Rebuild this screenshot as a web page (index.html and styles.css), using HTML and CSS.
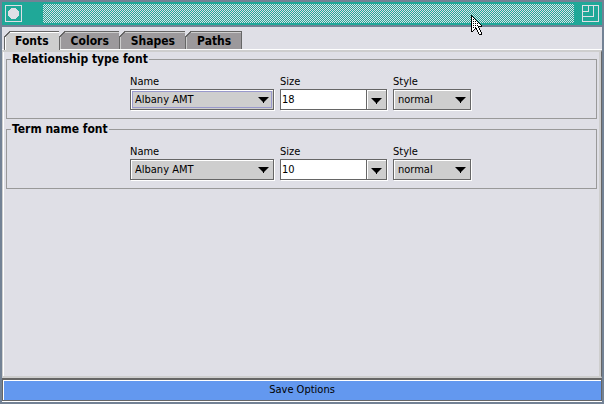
FILE: index.html
```html
<!DOCTYPE html>
<html lang="en">
<head>
<meta charset="utf-8">
<title>Options</title>
<link rel="stylesheet" href="styles.css">
</head>
<body>
<div class="window">
  <header class="titlebar">
    <button class="winbtn" type="button" aria-label="Window menu">
      <svg width="17" height="17" viewBox="0 0 17 17" shape-rendering="crispEdges"><path d="M.5.5h16v16H.5z" fill="none" stroke="#dfdfe6"/><path d="M6 3h5v1h1v1h1v1h1v5h-1v1h-1v1h-1v1H6v-1H5v-1H4v-1H3V6h1V5h1V4h1z" fill="#dfdfe6"/></svg>
    </button>
    <div class="stipple">
      <svg width="100%" height="100%"><defs><pattern id="dots" width="2" height="2" patternUnits="userSpaceOnUse"><path d="M1 0h1v1H1zM0 1h1v1H0z" fill="#dfdfe6" shape-rendering="crispEdges"/></pattern></defs><rect width="100%" height="100%" fill="url(#dots)"/></svg>
    </div>
    <button class="winbtn" type="button" aria-label="Maximize">
      <svg width="17" height="17" viewBox="0 0 17 17" shape-rendering="crispEdges"><path d="M.5.5h16v16H.5zM6.500 0v6.500H0M11.500 0v11.500H0" fill="none" stroke="#dfdfe6"/></svg>
    </button>
  </header>
  <nav class="tabs" role="tablist">
    <button class="tab selected" type="button" role="tab" aria-selected="true">Fonts</button>
    <button class="tab" type="button" role="tab">Colors</button>
    <button class="tab" type="button" role="tab">Shapes</button>
    <button class="tab" type="button" role="tab">Paths</button>
  </nav>
  <main class="panel">
    <fieldset class="group">
      <legend>Relationship type font</legend>
      <div class="field name">
        <label for="rel-name">Name</label>
        <div class="combo focused"><select id="rel-name"><option>Albany AMT</option></select><svg class="arrow" width="11" height="6" viewBox="0 0 11 6"><path d="M0 0h11L6 5v1H5V5z"/></svg></div>
      </div>
      <div class="field size">
        <label for="rel-size">Size</label>
        <div class="combo edit"><input id="rel-size" type="text" value="18"><button type="button" aria-label="Choose size"><svg width="11" height="6" viewBox="0 0 11 6"><path d="M0 0h11L6 5v1H5V5z"/></svg></button></div>
      </div>
      <div class="field style">
        <label for="rel-style">Style</label>
        <div class="combo"><select id="rel-style"><option>normal</option></select><svg class="arrow" width="11" height="6" viewBox="0 0 11 6"><path d="M0 0h11L6 5v1H5V5z"/></svg></div>
      </div>
    </fieldset>
    <fieldset class="group">
      <legend>Term name font</legend>
      <div class="field name">
        <label for="term-name">Name</label>
        <div class="combo"><select id="term-name"><option>Albany AMT</option></select><svg class="arrow" width="11" height="6" viewBox="0 0 11 6"><path d="M0 0h11L6 5v1H5V5z"/></svg></div>
      </div>
      <div class="field size">
        <label for="term-size">Size</label>
        <div class="combo edit"><input id="term-size" type="text" value="10"><button type="button" aria-label="Choose size"><svg width="11" height="6" viewBox="0 0 11 6"><path d="M0 0h11L6 5v1H5V5z"/></svg></button></div>
      </div>
      <div class="field style">
        <label for="term-style">Style</label>
        <div class="combo"><select id="term-style"><option>normal</option></select><svg class="arrow" width="11" height="6" viewBox="0 0 11 6"><path d="M0 0h11L6 5v1H5V5z"/></svg></div>
      </div>
    </fieldset>
  </main>
  <button class="save" type="button">Save Options</button>
</div>
<svg class="pointer" width="12" height="22" viewBox="0 0 12 22" shape-rendering="crispEdges"><path d="M0 0l10 10v1H7l3 6v2H8l-3-6-3 3H0z" fill="#fff" stroke="#000"/><path d="M2 4h1v1H2zM2 6h1v1H2zM4 6h1v1H4zM2 8h1v1H2zM4 8h1v1H4zM6 8h1v1H6zM2 10h1v1H2zM4 10h1v1H4zM6 10h1v1H6zM2 12h1v1H2zM4 12h1v1H4z"/></svg>
</body>
</html>
```
FILE: styles.css
```css
* {
  box-sizing: border-box;
}

body {
  margin: 0;
  color: #000;
  font: 11px/14px "DejaVu Sans Condensed", "DejaVu Sans", sans-serif;
}

button,
input,
select {
  margin: 0;
  padding: 0;
  border: 0;
  border-radius: 0;
  color: inherit;
  font: inherit;
}

svg {
  display: block;
}

.window {
  display: flex;
  flex-direction: column;
  min-height: 100vh;
  border: 2px solid #738295;
  background: #dfdfe6;
}

.titlebar {
  display: flex;
  align-items: center;
  justify-content: space-between;
  height: 25px;
  padding: 0 3px;
  border-bottom: 2px solid #738295;
  background: #20a898;
}

.winbtn {
  background: none;
}

.stipple {
  flex: 1;
  height: 19px;
  margin: 0 8px 0 21px;
}

.tabs {
  display: flex;
  padding: 4px 2px 0;
  border-bottom: 1px solid #fff;
}

.tab {
  position: relative;
  height: 18px;
  padding: 0 10px 0 11px;
  border: 1px solid #666;
  border-bottom: 0;
  border-left: 0;
  background: #9c999c;
  box-shadow: inset 1px 1px #cecece;
  font-size: 12px;
  font-weight: bold;
  line-height: 18px;
}

.tab::before {
  content: "";
  position: absolute;
  top: -1px;
  left: -1px;
  width: 7px;
  height: 7px;
  background: linear-gradient(135deg, #dfdfe6 0 4px, #666 4px 5px, transparent 5px);
}

.tab.selected {
  height: 19px;
  margin-bottom: -1px;
  padding: 0 10px;
  border-left: 1px solid #666;
  background: #cecece;
  box-shadow: inset 1px 1px #fff;
}

.panel {
  flex: 1;
  padding: 0 4px 0 3px;
  border: solid #cecece;
  border-width: 2px 1px 2px 1px;
  border-right-color: #666;
  box-shadow: inset 1px 0 #fff, inset -2px 0 #cecece;
}

.group {
  display: flex;
  justify-content: center;
  gap: 6px;
  min-width: 0;
  margin: 0 0 3px;
  padding: 9px 2px 8px 0;
  border: 1px solid #999;
}

.group legend {
  margin-left: 4px;
  padding: 0 1px;
  font-size: 12px;
  font-weight: bold;
}

.field label {
  display: block;
}

.name { width: 144px; }
.size { width: 107px; }
.style { width: 78px; }

.combo {
  position: relative;
  display: flex;
  height: 21px;
  border: 1px solid #666;
  background: #cecece;
  box-shadow: inset 1px 1px #fff, 1px 1px #fff;
}

.combo select {
  flex: 1;
  min-width: 0;
  padding: 0 4px;
  appearance: none;
  background: none;
}

.combo.focused select {
  margin: 1px;
  padding: 0 2px;
  border: 1px solid #9999cc;
}

.arrow {
  position: absolute;
  top: 7px;
  right: 4px;
  pointer-events: none;
}

.combo input {
  flex: 1;
  min-width: 0;
  padding: 0 1px;
  background: #fff;
}

.combo button {
  display: grid;
  place-items: center;
  width: 20px;
  padding-top: 2px;
  border-left: 1px solid #666;
  background: #cecece;
  box-shadow: inset 1px 1px #fff;
}

.save {
  height: 23px;
  margin-bottom: 1px;
  border: solid #666;
  border-width: 2px 1px 1px;
  background: #6398ef;
  box-shadow: inset 1px 1px #fff, 0 1px #fff;
}

.pointer {
  position: absolute;
  top: 15px;
  left: 471px;
  overflow: visible;
}
```
